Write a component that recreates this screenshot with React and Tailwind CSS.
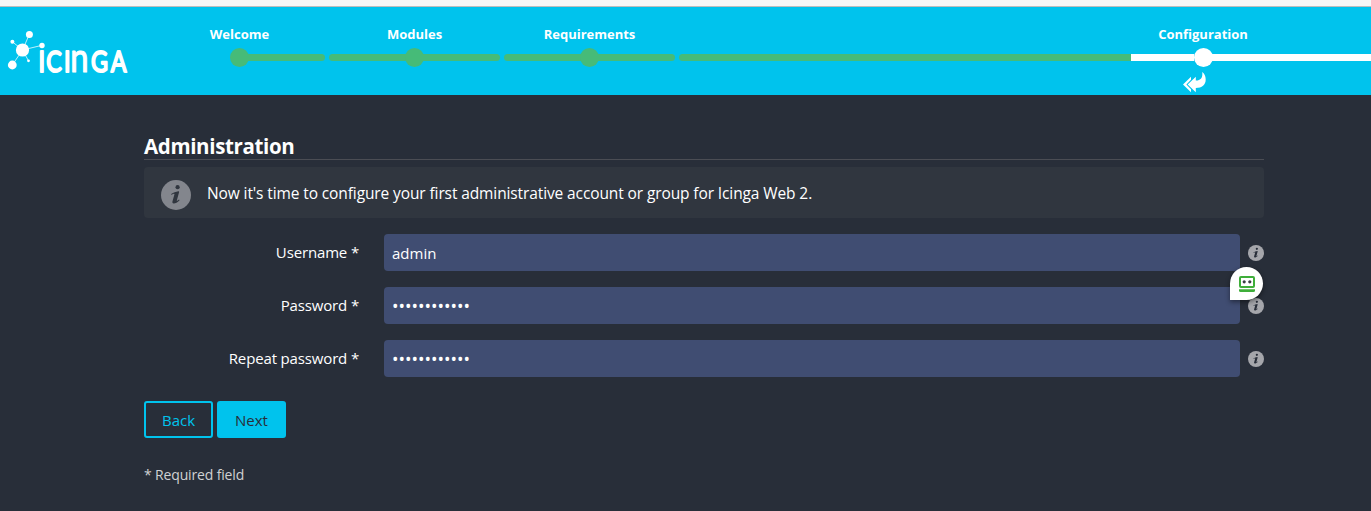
import React from "react";

function Logo() {
  return (
    <svg className="h-[88px] w-[140px] shrink-0" viewBox="0 7 140 88" role="img" aria-label="Icinga">
      <g stroke="#fff" strokeOpacity="0.75" strokeWidth="1">
        <path d="M22.5 50 29.3 34.5M22.5 50 12.3 41.7M22.5 50 42 45.3M22.5 50 12.3 65M22.5 50 28.5 60.8" />
      </g>
      <g fill="#fff">
        <circle cx="22.5" cy="50" r="6.6" />
        <circle cx="29.4" cy="34.4" r="3.5" />
        <circle cx="12.4" cy="41.8" r="2" />
        <circle cx="42" cy="45.5" r="2.7" />
        <circle cx="12.3" cy="65" r="4.4" />
        <circle cx="28.5" cy="60.8" r="1.4" />
        <text
          className="font-['Lato']"
          fontSize="29"
          transform="scale(0.8 1)"
          y="71.8"
          stroke="#fff"
          strokeWidth="2"
          strokeLinejoin="round"
        >
          <tspan x="48">I</tspan>
          <tspan x="57.8">C</tspan>
          <tspan x="80">I</tspan>
          <tspan x="87.8" fontSize="41" strokeWidth="1.2">n</tspan>
          <tspan x="113.8">G</tspan>
          <tspan x="138.5">A</tspan>
        </text>
      </g>
    </svg>
  );
}

function InfoIcon({ className, glyph }) {
  return (
    <svg className={className} viewBox="0 0 30 30" aria-hidden="true">
      <circle cx="15" cy="15" r="15" fill="currentColor" />
      <circle cx="16.6" cy="7.2" r="2.1" fill={glyph} />
      <path
        d="M10.2 14C12.4 12.4 14.8 11.6 17.4 11.2c.6 0 .8.4.6 1.3l-2.2 7.9c-.2.8.6.6 2.2-.9l.6.7c-2.2 2.4-4.1 3.3-5.8 3.3-1.3 0-1.7-.9-1.3-2.2l1.9-6.9c.2-.9-.6-.8-2.8.5z"
        fill={glyph}
      />
    </svg>
  );
}

function Step({ label, first }) {
  return (
    <div className="mr-1 flex w-[171px] shrink-0 flex-col items-center">
      <span className="text-[13px] leading-5 font-bold text-white">{label}</span>
      <div className="mt-[4px] flex h-[19px] w-full items-center">
        <div className={first ? "h-[7px] flex-1" : "h-[7px] flex-1 rounded-l-full bg-[#46bb78]"} />
        <div className="-mx-px size-[19px] rounded-full bg-[#46bb78]" />
        <div className="h-[7px] flex-1 rounded-r-full bg-[#46bb78]" />
      </div>
    </div>
  );
}

function Field({ label, type, value, inputClass }) {
  return (
    <div className="flex h-[37px] items-center">
      <label className="w-[215px] text-right text-[15px] tracking-[-0.15px]">{label} *</label>
      <input
        readOnly
        type={type}
        defaultValue={value}
        className={"ml-[25px] h-[37px] w-[856px] rounded-[4px] bg-[#404d72] px-2 text-white outline-none " + inputClass}
      />
      <InfoIcon className="ml-2 size-4 text-[#a5a6ab]" glyph="#282e39" />
    </div>
  );
}

export default function App() {
  return (
    <div className="relative flex h-[511px] w-[1371px] flex-col overflow-hidden bg-[#282e39] font-['Open_Sans','Noto_Sans',sans-serif] text-white">
      <div className="h-[7px] shrink-0 border-b border-[#bdbdbd] bg-[#f7f7f7]" />
      <header className="flex h-[88px] shrink-0 bg-[#00c3ed]">
        <Logo />
        <nav className="mt-[17px] ml-[14px] flex flex-1">
          <Step label="Welcome" first />
          <Step label="Modules" />
          <Step label="Requirements" />
          <div className="mt-[30px] h-[7px] w-[452px] shrink-0 rounded-l-full bg-[#46bb78]" />
          <div className="flex w-[240px] shrink-0 flex-col">
            <span className="w-[144px] text-center text-[13px] leading-5 font-bold">Configuration</span>
            <div className="mt-[4px] flex h-[19px] items-center">
              <div className="h-[7px] w-[63px] bg-white" />
              <div className="-mr-px size-[19px] rounded-full bg-white" />
              <div className="h-[7px] flex-1 bg-white" />
            </div>
            <svg className="mt-[5px] ml-[52px] h-[21px] w-[24px]" viewBox="0 0 24 21" fill="#fff">
              <path d="M8 4.7 0 12.4l8 7.9v-3l-4.6-4.9L8 7.7z" />
              <path d="M12.800 4.700 4.700 12.400l8.100 7.900v-4.300C19 16 22.700 12.800 22.700 7.500 22.700 4.300 21.300 1 19.200 0c.6 4.600-.4 8.500-6.400 8.600z" />
            </svg>
          </div>
        </nav>
      </header>

      <main className="ml-[144px] flex w-[1120px] flex-col">
        <h1 className="mt-[37px] h-[28px] border-b border-[#4b4d54] text-[20.5px] leading-[29px] font-bold tracking-[-0.35px]">
          Administration
        </h1>
        <div className="mt-[7px] flex h-[51px] items-center rounded-[4px] bg-[#30363f] pl-[17px]">
          <InfoIcon className="mt-[4px] size-[30px] text-[#83868d]" glyph="#30363f" />
          <p className="ml-4 pt-[3px] text-[15.5px] tracking-[-0.11px]">
            Now it's time to configure your first administrative account or group for Icinga Web 2.
          </p>
        </div>
        <form className="mt-4 flex flex-col gap-4">
          <Field label="Username" type="text" value="admin" inputClass="text-[15px]" />
          <Field label="Password" type="password" value="icingaadmin2" inputClass="pt-0.5 text-[17.3px]" />
          <Field label="Repeat password" type="password" value="icingaadmin2" inputClass="pt-0.5 text-[17.3px]" />
        </form>
        <div className="mt-6 flex gap-1 text-[15px]">
          <button className="h-[37px] w-[69px] rounded-[3px] border-2 border-[#00c3ed] pt-0.5 text-[#00c3ed]">Back</button>
          <button className="h-[37px] w-[69px] rounded-[3px] bg-[#00c3ed] pt-0.5 text-[#282e39]">Next</button>
        </div>
        <p className="mt-[27px] text-[14px] leading-5 tracking-[-0.15px] text-[#d0d1d3]">* Required field</p>
      </main>

      <div className="absolute top-[267px] left-[1230px] flex size-[33px] items-center justify-center rounded-full rounded-bl-none bg-white shadow-[0_2px_5px_rgba(0,0,0,0.45)]">
        <svg className="size-4" viewBox="0 0 16 16">
          <rect x="1" y="1" width="14" height="10" rx="1" fill="#fff" stroke="#3fae3a" strokeWidth="2" />
          <circle cx="5.2" cy="5.8" r="1.6" fill="#3a3f45" />
          <circle cx="10.8" cy="5.8" r="1.6" fill="#3a3f45" />
          <path d="M0 13.3h16v1.2q0 1.5-1.5 1.5h-13Q0 16 0 14.5z" fill="#3fae3a" />
        </svg>
      </div>
    </div>
  );
}
